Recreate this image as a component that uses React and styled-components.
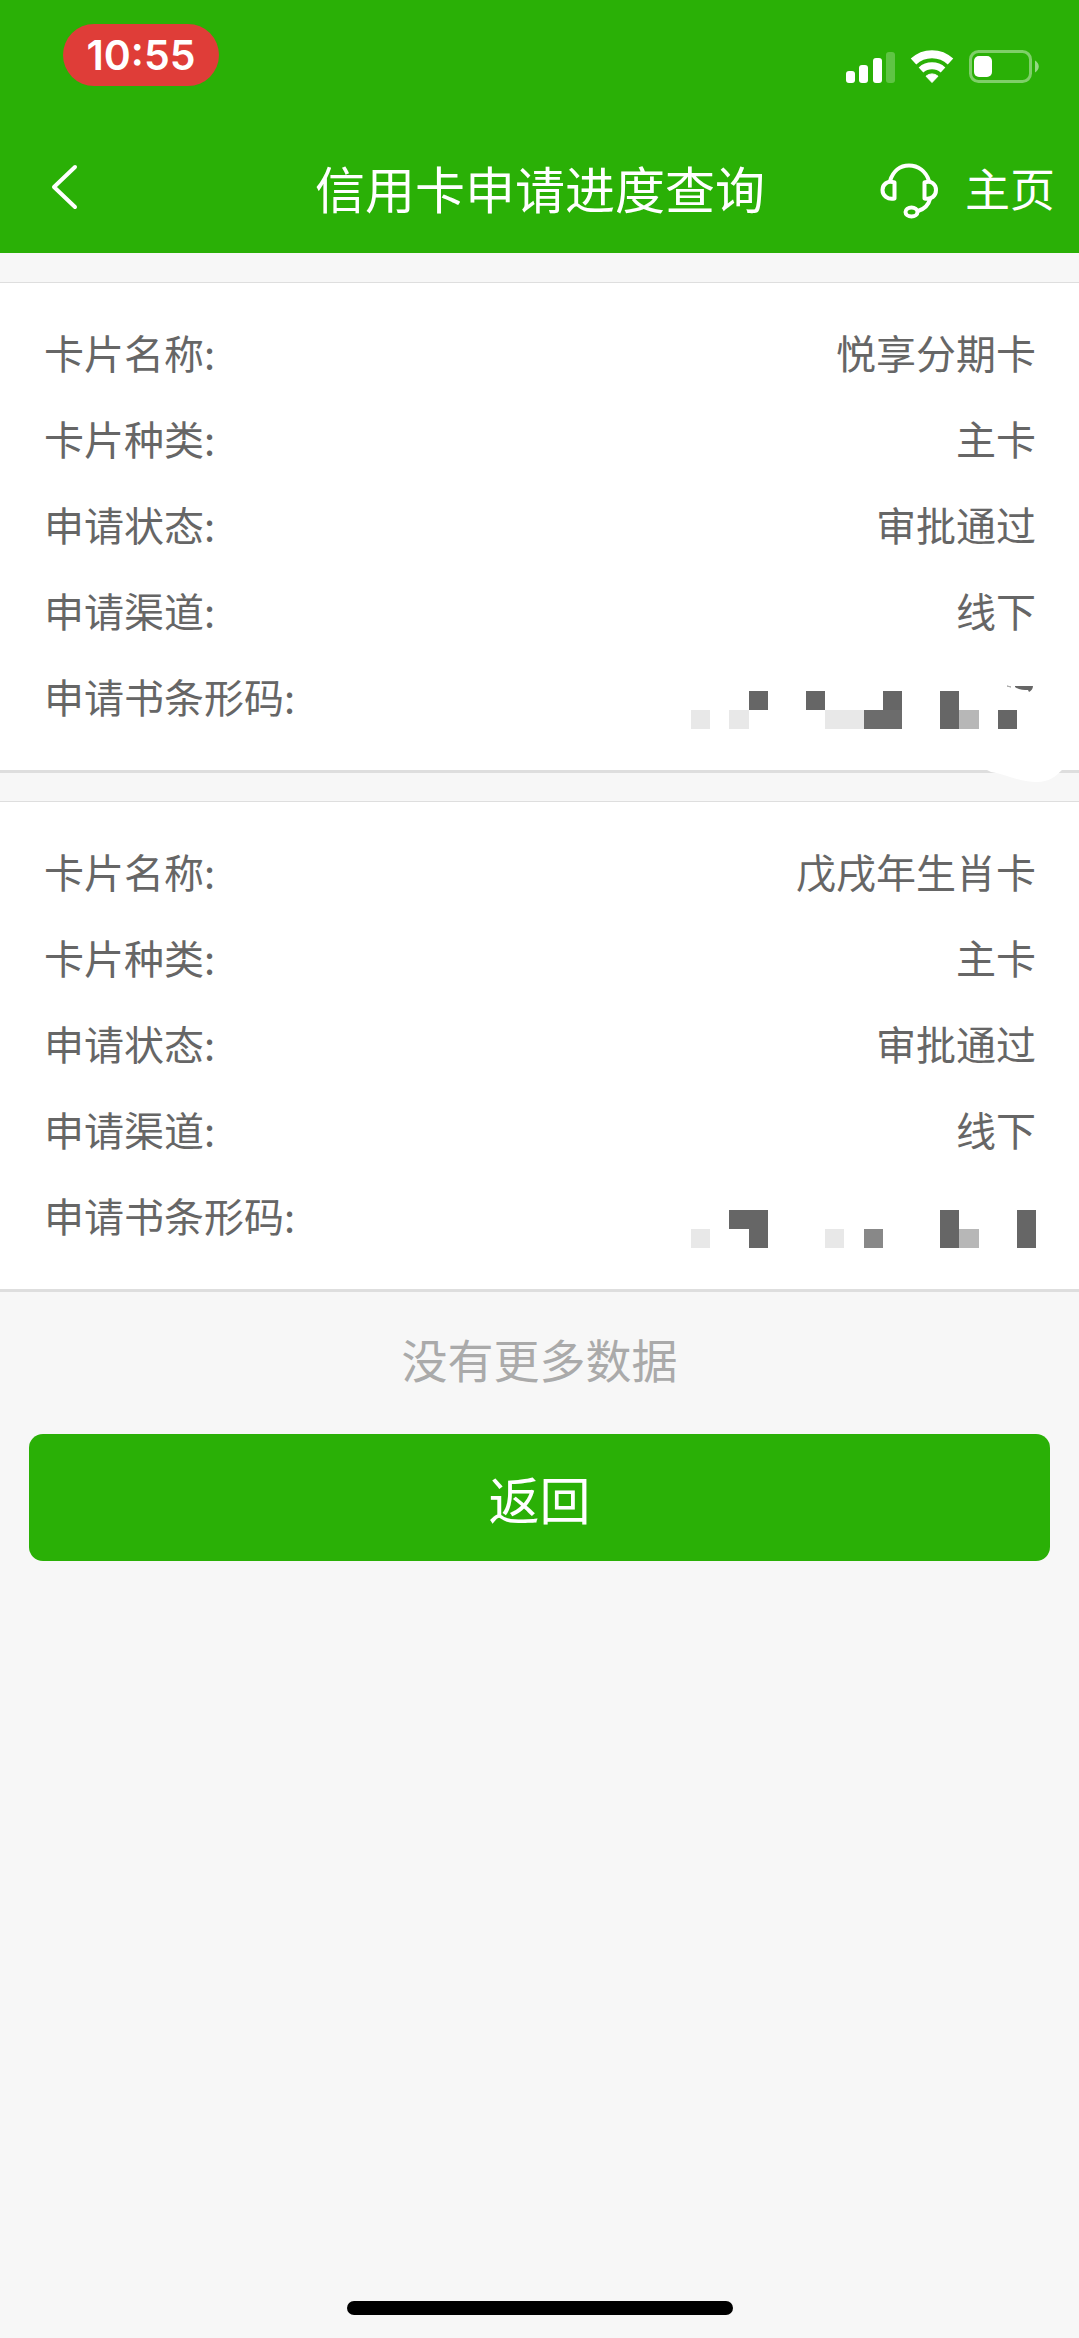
import styled, { createGlobalStyle } from 'styled-components';

const GREEN = '#2ab006';

// 申请记录, blocks: [列, 行, 宽, 高, 颜色]
const applications = [
  {
    id: 1,
    rows: [
      ['卡片名称:', '悦享分期卡'],
      ['卡片种类:', '主卡'],
      ['申请状态:', '审批通过'],
      ['申请渠道:', '线下'],
    ],
    blocks: [
      [0, 1, 1, 1, '#e8e8e8'],
      [2, 1, 1, 1, '#e8e8e8'],
      [3, 0, 1, 1, '#666'],
      [6, 0, 1, 1, '#666'],
      [7, 1, 2, 1, '#e8e8e8'],
      [9, 1, 2, 1, '#6c6c6c'],
      [10, 0, 1, 1, '#666'],
      [13, 0, 1, 2, '#666'],
      [14, 1, 1, 1, '#b7b7b7'],
      [16, 1, 1, 1, '#666'],
    ],
    smudged: true,
  },
  {
    id: 2,
    rows: [
      ['卡片名称:', '戊戌年生肖卡'],
      ['卡片种类:', '主卡'],
      ['申请状态:', '审批通过'],
      ['申请渠道:', '线下'],
    ],
    blocks: [
      [0, 1, 1, 1, '#e8e8e8'],
      [2, 0, 2, 1, '#666'],
      [3, 1, 1, 1, '#666'],
      [7, 1, 1, 1, '#e8e8e8'],
      [9, 1, 1, 1, '#888'],
      [13, 0, 1, 2, '#666'],
      [14, 1, 1, 1, '#b7b7b7'],
      [17, 0, 1, 2, '#666'],
    ],
    smudged: false,
  },
];

// 状态栏图标
const SignalIcon = () => (
  <svg width="49" height="32" viewBox="0 0 49 32" fill="#fff" aria-hidden="true">
    <rect x="0" y="20" width="9" height="12" rx="3" />
    <rect x="13" y="14" width="9" height="18" rx="3" />
    <rect x="27" y="7" width="9" height="25" rx="3" />
    <rect x="40" y="1" width="9" height="31" rx="3" opacity="0.25" />
  </svg>
);

const WifiIcon = () => (
  <svg width="44" height="33" viewBox="0 0 44 33" fill="none" aria-hidden="true">
    <path d="M3.5 11.5a27 27 0 0 1 37 0" stroke="#fff" strokeWidth="8" />
    <path d="M11 20a16.500 16.500 0 0 1 22 0" stroke="#fff" strokeWidth="7" />
    <path d="M22 32.500l-6-6.300a9 9 0 0 1 12 0z" fill="#fff" stroke="#fff" strokeWidth="1" strokeLinejoin="round" />
  </svg>
);

const BatteryIcon = () => (
  <svg width="70" height="33" viewBox="0 0 70 33" aria-hidden="true">
    <rect x="1.500" y="1.500" width="60" height="30" rx="8" fill="none" stroke="#fff" strokeOpacity="0.4" strokeWidth="3" />
    <rect x="5" y="6" width="18" height="21" rx="5" fill="#fff" />
    <path d="M66 10.500c5 3 5 9 0 12z" fill="#fff" opacity="0.5" />
  </svg>
);

const BackIcon = () => (
  <svg width="28" height="46" viewBox="0 0 28 46" fill="none" aria-hidden="true">
    <path d="M24 3L3 23L24 43" stroke="#fff" strokeWidth="4" strokeLinecap="round" strokeLinejoin="round" />
  </svg>
);

const HeadsetIcon = () => (
  <svg width="58" height="56" viewBox="0 0 58 56" fill="none" stroke="#fff" strokeWidth="4" strokeLinejoin="round" strokeLinecap="round" aria-hidden="true">
    <path d="M10 18C13 8 20 2.500 29 2.500S46 8 49 18" />
    <path d="M14.500 19.500v16c-7 1.500-12-3-12-8.500s5-10 12-7.500z" />
    <path d="M44.500 19.500v16c7 1.500 11.500-3 11.500-8.500s-4.500-10-11.500-7.500z" />
    <path d="M50 36c-1.500 6-5.500 10-12 12" />
    <ellipse cx="31.500" cy="49" rx="6" ry="4.500" />
  </svg>
);

const Barcode = ({ blocks }) => (
  <MosaicSvg viewBox="0 0 18 2" preserveAspectRatio="none" role="img" aria-label="已隐藏">
    {blocks.map(([x, y, w, h, color]) => (
      <rect key={`${x}-${y}`} x={x} y={y} width={w} height={h} fill={color} />
    ))}
  </MosaicSvg>
);

function App() {
  return (
    <Page>
      <GlobalStyle />

      <Header>
        <StatusBar>
          <Time>10:55</Time>
          <StatusIcons>
            <SignalIcon />
            <WifiIcon />
            <BatteryIcon />
          </StatusIcons>
        </StatusBar>
        <NavBar>
          <BackButton type="button" aria-label="后退">
            <BackIcon />
          </BackButton>
          <Title>信用卡申请进度查询</Title>
          <NavActions>
            <NavButton type="button" aria-label="客服">
              <HeadsetIcon />
            </NavButton>
            <HomeLink href="#">主页</HomeLink>
          </NavActions>
        </NavBar>
      </Header>

      <Main>
        {applications.map(({ id, rows, blocks, smudged }) => (
          <Card key={id}>
            {rows.map(([label, value]) => (
              <Row key={label}>
                <dt>{label}</dt>
                <dd>{value}</dd>
              </Row>
            ))}
            <Row>
              <dt>申请书条形码:</dt>
              <MosaicCell>
                <Barcode blocks={blocks} />
              </MosaicCell>
            </Row>
            {smudged && (
              <Smudge viewBox="0 0 88 100" aria-hidden="true">
                <path d="M6 84L12 87C30 90 40 97 58 97C70 97 76 92 84 84Z" fill="#fff" />
                <path d="M36 1h18c0 3-2 5-4 6l-1-2c-4 0-9 0-13-3z" fill="#666" />
                <path d="M28 1l4 1z" stroke="#aaa" />
              </Smudge>
            )}
          </Card>
        ))}
      </Main>

      <NoMore>没有更多数据</NoMore>
      <ReturnButton type="button">返回</ReturnButton>

      <HomeIndicator />
    </Page>
  );
}

const GlobalStyle = createGlobalStyle`
  * {
    box-sizing: border-box;
  }

  body {
    margin: 0;
    background: #f7f7f7;
    font-family: 'Noto Sans CJK SC', sans-serif;
  }

  button {
    padding: 0;
    border: 0;
    background: none;
    font-family: inherit;
    cursor: pointer;
  }

  svg {
    display: block;
  }
`;

const Page = styled.div`
  display: flex;
  flex-direction: column;
  min-height: 100vh;
`;

const Header = styled.header`
  background: ${GREEN};
  color: #fff;
`;

const StatusBar = styled.div`
  display: flex;
  justify-content: space-between;
  align-items: flex-start;
  height: 128px;
  padding: 24px 40px 0 63px;
`;

const Time = styled.time`
  width: 156px;
  border-radius: 31px;
  background: #df3d38;
  font-family: Inter, sans-serif;
  font-size: 41px;
  font-weight: 600;
  line-height: 62px;
  text-align: center;
`;

const StatusIcons = styled.div`
  display: flex;
  align-items: flex-end;
  gap: 15px;
  padding-top: 26px;
`;

const NavBar = styled.nav`
  display: grid;
  grid-template-columns: 1fr auto 1fr;
  align-items: center;
  height: 125px;
  padding: 0 24px 0 51px;
`;

const BackButton = styled.button`
  justify-self: start;
  padding-bottom: 8px;
`;

const Title = styled.h1`
  margin: 0;
  padding: 0 26px 8px 0;
  font-size: 50px;
  font-weight: 400;
  line-height: 72px;
`;

const NavActions = styled.div`
  display: flex;
  justify-content: flex-end;
  align-items: center;
  gap: 27px;
`;

const NavButton = styled.button`
  flex: none;
`;

const HomeLink = styled.a`
  padding-bottom: 6px;
  color: #fff;
  font-size: 45px;
  line-height: 64px;
  text-decoration: none;
`;

const Main = styled.main`
  display: flex;
  flex-direction: column;
  gap: 28px;
  padding-top: 29px;
`;

const Card = styled.dl`
  position: relative;
  margin: 0;
  padding: 26px 43px 31px 44px;
  border-top: 1px solid #dedede;
  border-bottom: 3px solid #dedede;
  background: #fff;
`;

const Row = styled.div`
  display: flex;
  justify-content: space-between;
  align-items: center;
  height: 86px;
  color: #666;
  font-size: 40px;
  line-height: 60px;

  dd {
    margin: 0;
  }
`;

const MosaicCell = styled.dd`
  align-self: flex-end;
  padding-bottom: 10px;
`;

const MosaicSvg = styled.svg`
  width: 345px;
  height: 38px;
  shape-rendering: crispEdges;
`;

// 卡片底部的白色涂抹, 盖住下边框
const Smudge = styled.svg`
  position: absolute;
  z-index: 1;
  right: 12px;
  bottom: -15px;
  width: 88px;
  height: 100px;
`;

const NoMore = styled.p`
  margin: 32px 0 42px;
  color: #aaa;
  font-size: 46px;
  line-height: 68px;
  text-align: center;
`;

const ReturnButton = styled.button`
  height: 127px;
  margin: 0 29px;
  border-radius: 14px;
  background: ${GREEN};
  color: #fff;
  font-size: 51px;
  line-height: 72px;
`;

const HomeIndicator = styled.div`
  align-self: center;
  width: 386px;
  height: 14px;
  margin: auto 0 23px;
  border-radius: 7px;
  background: #000;
`;

export default App;
